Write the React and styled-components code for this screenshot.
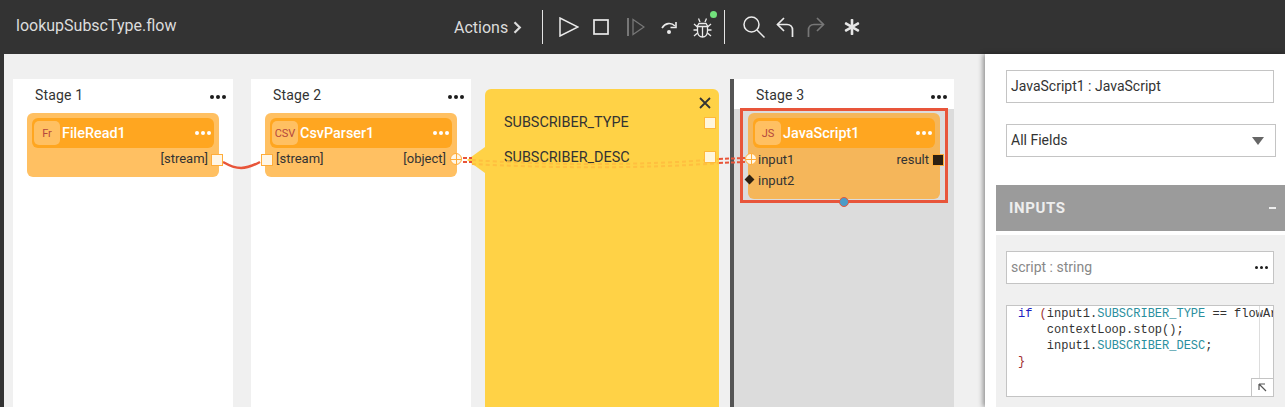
import styled, { createGlobalStyle } from 'styled-components';
import { FaAsterisk } from 'react-icons/fa';

const GlobalStyle = createGlobalStyle`
  html, body {
    margin: 0;
    height: 100%;
    overflow: hidden;
    background: #f0f0f0;
    font-family: Roboto, "Liberation Sans", sans-serif;
  }
  #root {
    height: 100%;
  }
`;

const Page = styled.div`
  width: 1285px;
  height: 407px;
  display: flex;
  flex-direction: column;
  overflow: hidden;
`;

const TopBar = styled.div`
  height: 54px;
  flex: none;
  background: #333;
  display: flex;
  align-items: center;
  padding-left: 16px;
`;

const FlowName = styled.div`
  width: 438px;
  flex: none;
  font-size: 16px;
  margin-bottom: 3px;
  color: #dcdcdc;
`;

const Actions = styled.div`
  width: 88px;
  flex: none;
  font-size: 16px;
  color: #dcdcdc;
  display: flex;
  align-items: center;
  gap: 5px;
`;

const Divider = styled.div`
  width: 1px;
  height: 34px;
  flex: none;
  background: #e4e4e4;
  margin-left: ${(p) => p.$ml || 0}px;
`;

const Tool = styled.div`
  flex: none;
  margin-left: ${(p) => p.$ml}px;
  display: flex;
  position: relative;
  svg {
    display: block;
  }
`;

const Led = styled.span`
  position: absolute;
  top: -6px;
  right: -5px;
  width: 7px;
  height: 7px;
  border-radius: 50%;
  background: #72e27c;
`;

const Body = styled.div`
  flex: 1;
  display: flex;
  min-height: 0;
  position: relative;
`;

const LeftEdge = styled.div`
  width: 4px;
  background: #333;
  flex: none;
`;

const Canvas = styled.div`
  width: 981px;
  flex: none;
  padding: 25px 0 0 9px;
  box-sizing: border-box;
  display: flex;
  align-items: stretch;
  background: #f0f0f0;
  position: relative;
`;

const Stage = styled.div`
  width: 220px;
  flex: none;
  background: #fff;
  margin-right: ${(p) => p.$mr || 0}px;
  display: flex;
  flex-direction: column;
`;

const ActiveStage = styled(Stage)`
  border-left: 4px solid #555;
  margin-left: 11px;
  background: #dcdcdc;
`;

const StageHead = styled.div`
  height: 30px;
  flex: none;
  box-sizing: border-box;
  background: #fff;
  display: flex;
  justify-content: space-between;
  align-items: center;
  padding: 2px 7px 0 22px;
  font-size: 14px;
  letter-spacing: 0.15px;
  color: #333;
`;

const Dots = styled.div`
  display: flex;
  gap: 2px;
  margin-top: ${(p) => p.$mt || 0}px;
  span {
    width: 4px;
    height: 4px;
    border-radius: 50%;
    background: ${(p) => p.$color || '#1c1c1c'};
  }
`;

const SmallDots = styled(Dots)`
  margin-right: 1px;
  span {
    width: 3px;
    height: 3px;
  }
`;

const ThreeDots = ({ color, mt }) => (
  <Dots $color={color} $mt={mt}>
    <span />
    <span />
    <span />
  </Dots>
);

const NodeFrame = styled.div`
  margin: -1px 0 0 6px;
  width: 208px;
  height: 95px;
  box-sizing: border-box;
  border: 3px solid #e8553a;
  padding: 2px 5px;
  position: relative;
`;

const Node = styled.div`
  width: 192px;
  height: ${(p) => p.$h || 64}px;
  flex: none;
  box-sizing: border-box;
  margin: ${(p) => p.$mt || 0}px 0 0 ${(p) => p.$ml || 0}px;
  background: ${(p) => p.$bg || '#ffc062'};
  border-radius: 6px;
  padding: 5px;
  position: relative;
`;

const NodeTitle = styled.div`
  height: 30px;
  background: #ffa620;
  border-radius: 6px;
  display: flex;
  align-items: center;
  padding: 0 3px 0 2px;
  color: #fff;
  font-size: 14.4px;
  font-weight: 500;
  gap: 2px;
`;

const NodeBadge = styled.div`
  width: 26px;
  height: 24px;
  background: #ffc062;
  border-radius: 5px;
  display: flex;
  align-items: center;
  justify-content: center;
  color: #b5473d;
  font-size: 11px;
  font-weight: 400;
  flex: none;
`;

const NodeName = styled.div`
  flex: 1;
`;

const PortRow = styled.div`
  height: 21px;
  margin-top: ${(p) => p.$mt || 0}px;
  display: flex;
  align-items: center;
  justify-content: space-between;
  font-size: 13px;
  color: #333;
`;

const PortLabel = styled.span`
  margin: 0 ${(p) => p.$mr || 0}px 0 ${(p) => p.$ml || 0}px;
`;

const SquarePort = styled.span`
  position: absolute;
  z-index: 2;
  width: 10px;
  height: 10px;
  top: 41px;
  left: ${(p) => (p.$left !== undefined ? `${p.$left}px` : 'auto')};
  right: ${(p) => (p.$right !== undefined ? `${p.$right}px` : 'auto')};
  border: 1px solid #ffad3a;
  background: ${(p) => p.$bg || '#fff6e6'};
`;

const RoundPort = styled.span`
  position: absolute;
  z-index: 2;
  box-sizing: border-box;
  width: 12px;
  height: 12px;
  top: 40px;
  left: ${(p) => (p.$left !== undefined ? `${p.$left}px` : 'auto')};
  right: ${(p) => (p.$right !== undefined ? `${p.$right}px` : 'auto')};
  border-radius: 50%;
  border: 1px solid #ffad3a;
  background:
    linear-gradient(#ffad3a, #ffad3a) center / 100% 1px no-repeat,
    linear-gradient(#ffad3a, #ffad3a) center / 1px 100% no-repeat,
    #fff6e6;
`;

const DiamondPort = styled.span`
  position: absolute;
  width: 7px;
  height: 7px;
  left: -2px;
  top: 63px;
  background: #2e2112;
  transform: rotate(45deg);
`;

const Anchor = styled.span`
  position: absolute;
  left: 50%;
  bottom: -7px;
  margin-left: -5px;
  width: 8px;
  height: 8px;
  border-radius: 50%;
  background: #4a9cc8;
  border: 1px solid #e8553a;
`;

const FieldPanel = styled.div`
  width: 234px;
  flex: none;
  margin: 10px 0 0 14px;
  background: #ffd246;
  border-radius: 6px 6px 0 0;
  position: relative;
  padding: 25px 0 0 19px;
  box-sizing: border-box;
  font-size: 14.4px;
  color: #333;
  &::before {
    content: '';
    position: absolute;
    left: -18px;
    top: 58px;
    border-style: solid;
    border-width: 13px 18px 13px 0;
    border-color: transparent #ffd246 transparent transparent;
  }
`;

const FieldRow = styled.div`
  height: 35px;
  line-height: 18px;
`;

const CloseX = styled.svg`
  position: absolute;
  top: 8px;
  right: 8px;
`;

const FieldPort = styled.span`
  position: absolute;
  z-index: 2;
  right: 3px;
  top: ${(p) => p.$top}px;
  width: 10px;
  height: 10px;
  background: #fff6dc;
  border: 1px solid #ffb93a;
`;

const Wires = styled.svg`
  position: absolute;
  z-index: 1;
  left: 0;
  top: 0;
  width: 981px;
  height: 353px;
  pointer-events: none;
`;

const Inspector = styled.div`
  width: 300px;
  flex: none;
  background: #fff;
  box-shadow: -2px 0 5px rgba(0, 0, 0, 0.4);
  padding: 16px 0 0 11px;
  box-sizing: border-box;
  position: relative;
  z-index: 3;
`;

const FieldBox = styled.div`
  width: ${(p) => p.$w || 268}px;
  height: 33px;
  box-sizing: border-box;
  margin-left: 10px;
  margin-bottom: 21px;
  border: 1px solid #c4c4c4;
  background: #fff;
  display: flex;
  align-items: center;
  justify-content: space-between;
  padding: 0 4px 1px;
  font-size: 14px;
  color: ${(p) => p.$color || '#333'};
`;

const Caret = styled.span`
  width: 0;
  height: 0;
  margin: 2px 7px 0 0;
  border-style: solid;
  border-width: 8px 6px 0 6px;
  border-color: #666 transparent transparent transparent;
`;

const SectionHead = styled.div`
  margin-top: 28px;
  height: 46px;
  background: #9b9b9b;
  color: #eee;
  display: flex;
  align-items: center;
  justify-content: space-between;
  padding: 0 9px 0 13px;
  font-size: 15px;
  font-weight: 700;
  letter-spacing: 0.6px;
`;

const Minus = styled.span`
  width: 7px;
  height: 2px;
  background: #eee;
`;

const SectionBody = styled.div`
  margin-top: 4px;
  background: #f0f0f0;
  padding-top: 16px;
  height: 172px;
  box-sizing: border-box;
`;

const CodeBox = styled.div`
  width: 268px;
  height: 92px;
  box-sizing: border-box;
  margin-left: 10px;
  border: 1px solid #c4c4c4;
  background: #fff;
  position: relative;
  overflow: hidden;
  padding: 0 0 0 11px;
  font-family: "Liberation Mono", monospace;
  font-size: 12px;
  line-height: 16px;
  color: #333;
  white-space: pre;
`;

const Kw = styled.span`
  color: #2020c0;
`;

const Prop = styled.span`
  color: #2a8f9e;
`;

const Brace = styled.span`
  color: #a03030;
`;

const ScrollTrack = styled.span`
  position: absolute;
  top: 0;
  bottom: 17px;
  right: 13px;
  width: 1px;
  background: #ddd;
`;

const ResizeBtn = styled.span`
  position: absolute;
  right: 0;
  bottom: 0;
  width: 22px;
  height: 18px;
  box-sizing: border-box;
  background: #fff;
  border-left: 1px solid #c4c4c4;
  border-top: 1px solid #c4c4c4;
  display: flex;
  align-items: center;
  justify-content: center;
`;

function Glyph({ w, h, color = '#eaeaea', width = 1.5, children }) {
  return (
    <svg width={w} height={h} viewBox={`0 0 ${w} ${h}`} fill="none" stroke={color} strokeWidth={width}>
      {children}
    </svg>
  );
}

function App() {
  return (
    <Page>
      <GlobalStyle />
      <TopBar>
        <FlowName>lookupSubscType.flow</FlowName>
        <Actions>
          Actions
          <svg width="9" height="13" viewBox="0 0 9 13" fill="none" stroke="#dcdcdc" strokeWidth="2.2">
            <path d="M1.5 1.2 6.8 6.5l-5.3 5.3" />
          </svg>
        </Actions>
        <Divider />
        <Tool $ml={16}>
          <Glyph w={20} h={20}>
            <path d="M1 1v18l18-9z" />
          </Glyph>
        </Tool>
        <Tool $ml={14}>
          <Glyph w={16} h={16} width={1.7}>
            <rect x="1" y="1" width="14" height="14" />
          </Glyph>
        </Tool>
        <Tool $ml={18}>
          <Glyph w={18} h={18} color="#777" width={1.3}>
            <path d="M1 0v18" strokeWidth="2" />
            <path d="M6 1.500v15L17 9z" />
          </Glyph>
        </Tool>
        <Tool $ml={16}>
          <Glyph w={17} h={13} width={1.6}>
            <path d="M1 7c3-5 9-6 13-2" />
            <path d="M15 1v5.500H9.500" />
            <circle cx="8" cy="11" r="2" fill="#eaeaea" stroke="none" />
          </Glyph>
        </Tool>
        <Tool $ml={15}>
          <Glyph w={19} h={21} width={1.3}>
            <path d="M5.500 1.500 7 5M13.500 1.500 12 5" />
            <path d="M6 6.500h7l1.500 2.500v5c0 3.500-2 6-5 6s-5-2.500-5-6V9z" />
            <path d="M4.500 9.500h10M9.500 9.500V20" />
            <path d="M1 7l3.500 3M18 7l-3.500 3M0.500 13h4M18.500 13h-4M1 19l3.500-3M18 19l-3.500-3" />
          </Glyph>
          <Led />
        </Tool>
        <Divider $ml={12} />
        <Tool $ml={18}>
          <Glyph w={22} h={22} width={1.5}>
            <circle cx="8.500" cy="8.500" r="7.500" />
            <path d="m14 14 7.500 7.500" />
          </Glyph>
        </Tool>
        <Tool $ml={11}>
          <Glyph w={18} h={21} width={1.7}>
            <path d="M8 1 1.500 7.500 8 14" />
            <path d="M1.500 7.500H11c3.500 0 5.500 2.500 5.500 5.500v7" />
          </Glyph>
        </Tool>
        <Tool $ml={13}>
          <Glyph w={18} h={21} color="#777" width={1.7}>
            <path d="m10 1 6.500 6.500L10 14" />
            <path d="M16.500 7.500H7C3.500 7.500 1.500 10 1.500 13v7" />
          </Glyph>
        </Tool>
        <Tool $ml={19}>
          <FaAsterisk size={16} color="#e6e6e6" />
        </Tool>
      </TopBar>
      <Body>
        <LeftEdge />
        <Canvas>
          <Stage $mr={18}>
            <StageHead>
              Stage 1
              <ThreeDots mt={4} />
            </StageHead>
            <Node $ml={14} $mt={4}>
              <NodeTitle>
                <NodeBadge>Fr</NodeBadge>
                <NodeName>FileRead1</NodeName>
                <ThreeDots color="#fff" />
              </NodeTitle>
              <PortRow>
                <span />
                <PortLabel $mr={6}>[stream]</PortLabel>
              </PortRow>
              <SquarePort $right={-4} />
            </Node>
          </Stage>
          <Stage>
            <StageHead>
              Stage 2
              <ThreeDots mt={4} />
            </StageHead>
            <Node $ml={14} $mt={4}>
              <NodeTitle>
                <NodeBadge>CSV</NodeBadge>
                <NodeName>CsvParser1</NodeName>
                <ThreeDots color="#fff" />
              </NodeTitle>
              <PortRow>
                <PortLabel $ml={6}>[stream]</PortLabel>
                <PortLabel $mr={6}>[object]</PortLabel>
              </PortRow>
              <SquarePort $left={-4} />
              <RoundPort $right={-5} />
            </Node>
          </Stage>
          <FieldPanel>
            <CloseX width="12" height="12" viewBox="0 0 12 12" stroke="#333" strokeWidth="1.8">
              <path d="m1 1 10 10M11 1 1 11" />
            </CloseX>
            <FieldRow>SUBSCRIBER_TYPE</FieldRow>
            <FieldRow>SUBSCRIBER_DESC</FieldRow>
            <FieldPort $top={28} />
            <FieldPort $top={62} />
          </FieldPanel>
          <ActiveStage>
            <StageHead>
              Stage 3
              <ThreeDots mt={4} />
            </StageHead>
            <NodeFrame>
              <Node $h={86} $bg="#f5b65a">
                <NodeTitle>
                  <NodeBadge>JS</NodeBadge>
                  <NodeName>JavaScript1</NodeName>
                  <ThreeDots color="#fff" />
                </NodeTitle>
                <PortRow $mt={1}>
                  <PortLabel $ml={5}>input1</PortLabel>
                  <PortLabel $mr={6}>result</PortLabel>
                </PortRow>
                <PortRow>
                  <PortLabel $ml={5}>input2</PortLabel>
                </PortRow>
                <RoundPort $left={-3} />
                <SquarePort $right={-4} $bg="#2e2112" />
                <DiamondPort />
              </Node>
              <Anchor />
            </NodeFrame>
          </ActiveStage>
          <Wires viewBox="0 0 981 353">
            <path d="M219 108c14 8 22 8 37 0" fill="none" stroke="#e8553a" strokeWidth="2.5" />
            <path d="M468 106C540 111 640 112 715 105" fill="none" stroke="#ffbf3f" strokeWidth="2" strokeDasharray="4 3" />
            <path d="M468 110C540 114 640 115 715 109" fill="none" stroke="#ffbf3f" strokeWidth="2" strokeDasharray="4 3" />
            <path d="M459 104h9M459 108h9M715 105l26-1M715 109l26-1" fill="none" stroke="#e8553a" strokeWidth="2" strokeDasharray="4 2" />
          </Wires>
        </Canvas>
        <Inspector>
          <FieldBox>JavaScript1 : JavaScript</FieldBox>
          <FieldBox $w={270}>
            All Fields
            <Caret />
          </FieldBox>
          <SectionHead>
            INPUTS
            <Minus />
          </SectionHead>
          <SectionBody>
            <FieldBox $color="#888">
              script : string
              <SmallDots>
                <span />
                <span />
                <span />
              </SmallDots>
            </FieldBox>
            <CodeBox>
              <Kw>if</Kw> <Brace>(</Brace>input1.<Prop>SUBSCRIBER_TYPE</Prop> == flowArgs{'\n'}
              {'    '}contextLoop.stop();{'\n'}
              {'    '}input1.<Prop>SUBSCRIBER_DESC</Prop>;{'\n'}
              <Brace>{'}'}</Brace>
              <ScrollTrack />
              <ResizeBtn>
                <svg width="9" height="9" viewBox="0 0 9 9" fill="none" stroke="#555" strokeWidth="1.2">
                  <path d="M1 1h6M1 1v6M1 1l7 7" />
                </svg>
              </ResizeBtn>
            </CodeBox>
          </SectionBody>
        </Inspector>
      </Body>
    </Page>
  );
}

export default App;
